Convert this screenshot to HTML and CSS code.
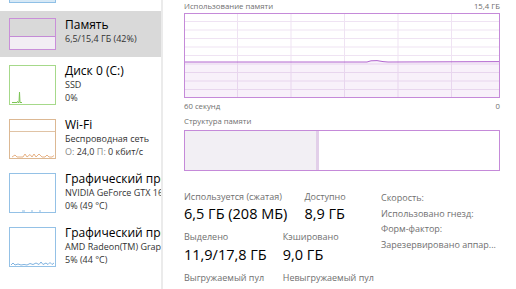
FILE: index.html
```
<!DOCTYPE html>
<html lang="ru">
<head>
    <meta charset="UTF-8">
    <title>Диспетчер задач — Память</title>
    <link rel="stylesheet" href="styles.css">
</head>
<body>

    <div class="sidebar">
        <!-- ЦП, видно только низ графика -->
        <div class="item item-peek">
            <svg class="thumb thumb-cpu" width="47" height="40" viewBox="0 0 47 40">
                <rect x="0.5" y="0.5" width="46" height="39" fill="#f4f9fd" stroke="#8fc0e6"/>
                <path d="M1 38 L46 38" stroke="#b9d8ef"/>
            </svg>
        </div>

        <div class="item item-active">
            <svg class="thumb" width="47" height="32" viewBox="0 0 47 32">
                <rect x="0.5" y="18" width="46" height="13.5" fill="#f2eef4"/>
                <path d="M1 18.5 L46 18.5" stroke="#c48bd6"/>
                <rect x="0.5" y="0.5" width="46" height="31" fill="none" stroke="#c98fd9"/>
            </svg>
            <div class="item-text">
                <div class="item-title">Память</div>
                <div class="item-sub">6,5/15,4 ГБ (42%)</div>
            </div>
        </div>

        <div class="item">
            <svg class="thumb" width="47" height="40" viewBox="0 0 47 40">
                <rect x="0.5" y="0.5" width="46" height="39" fill="#fff" stroke="#a6d98a"/>
                <path d="M3 37.5 L8 37.5 L8.5 36.5 L9 37.5 L10 37.5 L10.5 27 L11 37.5 L13 37.5" fill="none" stroke="#7cc455" stroke-width="1"/>
            </svg>
            <div class="item-text">
                <div class="item-title">Диск 0 (C:)</div>
                <div class="item-sub">SSD</div>
                <div class="item-sub">0%</div>
            </div>
        </div>

        <div class="item">
            <svg class="thumb" width="47" height="40" viewBox="0 0 47 40">
                <rect x="0.5" y="0.5" width="46" height="39" fill="#fff" stroke="#dcb893"/>
                <path d="M1 12.5 L46 12.5" stroke="#e0c3a5"/>
                <path d="M3 38 L6 36 L8 38 L14 38 L16 35 L18 38 L21 35.5 L23 38 L25 35 L27 38 L30 35 L33 38 L36 38 L38 36 L40 38 L43 38 L45 36.5" fill="none" stroke="#e4a977" stroke-width="0.9"/>
            </svg>
            <div class="item-text">
                <div class="item-title">Wi-Fi</div>
                <div class="item-sub">Беспроводная сеть</div>
                <div class="item-sub"><span class="muted">О:</span> 24,0 <span class="muted">П:</span> 0 кбит/с</div>
            </div>
        </div>

        <div class="item">
            <svg class="thumb" width="47" height="40" viewBox="0 0 47 40">
                <rect x="0.5" y="0.5" width="46" height="39" fill="#fff" stroke="#94c1e6"/>
                <path d="M13 38 L16 38 M22 38 L24 38 M30 38 L32 38" fill="none" stroke="#8dbde4" stroke-width="1"/>
            </svg>
            <div class="item-text">
                <div class="item-title">Графический процессор 0</div>
                <div class="item-sub">NVIDIA GeForce GTX 1650</div>
                <div class="item-sub">0% (49 °C)</div>
            </div>
        </div>

        <div class="item">
            <svg class="thumb" width="47" height="40" viewBox="0 0 47 40">
                <rect x="0.5" y="0.5" width="46" height="39" fill="#fff" stroke="#94c1e6"/>
                <path d="M2 38 L4 36 L6 38 L9 37 L12 38 L15 37.5 L18 38 L21 36.5 L24 37.5 L27 36 L30 37.5 L32 35 L34 37.5 L37 36 L39 37.5 L41 35.5 L43 37.5 L45 36" fill="none" stroke="#6fa9dc" stroke-width="0.9"/>
            </svg>
            <div class="item-text">
                <div class="item-title">Графический процессор 1</div>
                <div class="item-sub">AMD Radeon(TM) Graphics</div>
                <div class="item-sub">5% (44 °C)</div>
            </div>
        </div>
    </div>

    <div class="main">
        <div class="caption-row">
            <span>Использование памяти</span>
            <span>15,4 ГБ</span>
        </div>

        <div class="usage-graph">
            <svg width="314" height="83" viewBox="0 0 314 83">
                <g stroke="#efe3f3" stroke-width="1">
                    <path d="M0 7.5 H314 M0 16 H314 M0 24.5 H314 M0 33 H314 M0 41.5 H314 M0 50 H314 M0 58.5 H314 M0 67 H314 M0 75.5 H314"/>
                    <path d="M52.5 0 V83 M106 0 V83 M159.5 0 V83 M213 0 V83 M266.5 0 V83"/>
                </g>
                <path d="M0 48 L182 48 L186 46.8 L192 46.6 L198 47.6 L203 48 L314 47.6 L314 83 L0 83 Z" fill="#8b12ae" fill-opacity="0.06"/>
                <path d="M0 48 L182 48 L186 46.8 L192 46.6 L198 47.6 L203 48 L314 47.6" fill="none" stroke="#b266cf" stroke-width="1"/>
            </svg>
        </div>

        <div class="caption-row axis-row">
            <span>60 секунд</span>
            <span>0</span>
        </div>

        <div class="caption-row section-title">
            <span>Структура памяти</span>
        </div>

        <div class="composition">
            <div class="comp-used"></div>
            <div class="comp-modified"></div>
            <div class="comp-free"></div>
        </div>

        <div class="stats">
            <div class="stats-left">
                <div class="stat-row">
                    <div class="stat">
                        <div class="stat-label">Используется (сжатая)</div>
                        <div class="stat-value">6,5 ГБ (208 МБ)</div>
                    </div>
                    <div class="stat">
                        <div class="stat-label">Доступно</div>
                        <div class="stat-value">8,9 ГБ</div>
                    </div>
                </div>
                <div class="stat-grid">
                    <div class="stat-label">Выделено</div>
                    <div class="stat-label">Кэшировано</div>
                    <div class="stat-value value-second">11,9/17,8 ГБ</div>
                    <div class="stat-value value-second">9,0 ГБ</div>
                    <div class="stat-label pool">Выгружаемый пул</div>
                    <div class="stat-label pool">Невыгружаемый пул</div>
                </div>
            </div>
            <div class="stats-right">
                <div class="stat-label">Скорость:</div>
                <div class="stat-label">Использовано гнезд:</div>
                <div class="stat-label">Форм-фактор:</div>
                <div class="stat-label">Зарезервировано аппар...</div>
            </div>
        </div>
    </div>

</body>
</html>
```

FILE: styles.css
```
body {
    font-family: "Segoe UI", "Open Sans", sans-serif;
    background: #fff;
    color: #000;
    margin: 0;
    display: flex;
    height: 289px;
    overflow: hidden;
}
.sidebar {
    width: 161px;
    flex-shrink: 0;
    border-right: 2px solid #ebebeb;
    overflow: hidden;
}
.item {
    display: flex;
    gap: 9px;
    height: 54px;
    padding: 8px 0 0 9px;
    box-sizing: border-box;
}
.thumb {
    display: block;
    flex-shrink: 0;
}
.item-peek {
    height: 11px;
    padding-top: 0;
    overflow: hidden;
}
.thumb-cpu {
    margin-top: -37px;
}
.item-active {
    height: 46px;
    padding-top: 7px;
    background: #d9d9d9;
}
.item-text {
    white-space: nowrap;
    margin-top: -1px;
}
.item-active .item-text {
    margin-top: 0;
}
.item-title {
    font-size: 12px;
    line-height: 14px;
    color: #000;
}
.item-sub {
    font-size: 9px;
    line-height: 13px;
    color: #333;
}
.muted {
    color: #8a8a8a;
}
.main {
    flex: 1;
    padding: 0 16px 0 21px;
    min-width: 0;
}
.caption-row {
    display: flex;
    justify-content: space-between;
    font-size: 7.75px;
    line-height: 13px;
    color: #6f6f6f;
    white-space: nowrap;
}
.usage-graph {
    height: 85px;
    border: 1px solid #c58ad9;
    box-sizing: border-box;
}
.usage-graph svg {
    display: block;
}
.axis-row {
    margin-top: 2px;
}
.section-title {
    margin-top: 2px;
    margin-bottom: 2px;
}
.composition {
    display: flex;
    height: 41px;
    border: 1px solid #c58ad9;
    box-sizing: border-box;
}
.comp-used {
    width: 131px;
    background: #f2eff4;
}
.comp-modified {
    width: 3px;
    background: #e2cfe9;
}
.comp-free {
    flex: 1;
    background: #fff;
}
.stats {
    display: flex;
    margin-top: 19px;
}
.stats-left {
    width: 197px;
    flex-shrink: 0;
}
.stat-row {
    display: flex;
    gap: 17px;
    margin-bottom: 6px;
}
.stat-grid {
    display: grid;
    grid-template-columns: auto auto;
    justify-content: start;
    column-gap: 16px;
}
.stat-label {
    font-size: 9px;
    line-height: 13px;
    color: #707070;
    white-space: nowrap;
}
.stat-value {
    font-size: 14.5px;
    line-height: 20px;
    margin-top: 1px;
    color: #000;
    white-space: nowrap;
}
.value-second {
    margin-top: 2px;
}
.pool {
    margin-top: 6px;
}
.stats-right .stat-label {
    line-height: 15.5px;
}
```
